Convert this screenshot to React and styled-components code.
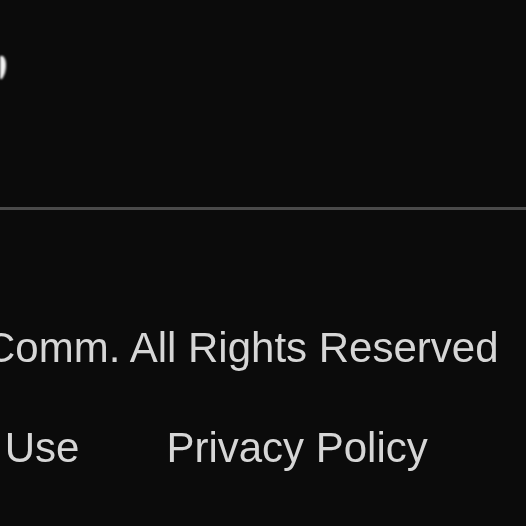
import React from "react";
import styled, { createGlobalStyle } from "styled-components";

const Global = createGlobalStyle`
  html, body {
    margin: 0;
    padding: 0;
    background: #0b0b0b;
    overflow: hidden;
  }
  #root {
    min-height: 526px;
  }
`;

const Footer = styled.footer`
  width: 526px;
  height: 526px;
  background: #0b0b0b;
  color: #d6d6d6;
  font-family: "Liberation Sans", Arial, Helvetica, sans-serif;
  display: flex;
  flex-direction: column;
  overflow: hidden;
`;

const TopArea = styled.div`
  height: 207px;
  display: flex;
  align-items: flex-start;
  padding-top: 55px;
  box-sizing: border-box;
`;

const LogoTail = styled.svg`
  display: block;
  width: 6px;
  height: 26px;
  filter: blur(0.8px);
`;

const Divider = styled.hr`
  margin: 0;
  border: 0;
  height: 3px;
  background: #4a4a4a;
  width: 100%;
`;

const Bottom = styled.div`
  display: flex;
  flex-direction: column;
  gap: 52px;
  padding-top: 114px;
`;

const Line = styled.div`
  display: flex;
  align-items: baseline;
  gap: ${(p) => p.$gap || 0}px;
  margin-left: ${(p) => p.$shift || 0}px;
  font-size: 42px;
  line-height: 48px;
  white-space: nowrap;
  filter: blur(0.4px);
`;

const Link = styled.a`
  color: #d6d6d6;
  text-decoration: none;
`;

export default function App() {
  return (
    <>
      <Global />
      <Footer>
        <TopArea>
          <LogoTail viewBox="0 0 6 26">
            <path d="M0 1 H3 Q6 4 6 10 Q6 18 2 24 H0 Z" fill="#f2f2f2" />
          </LogoTail>
        </TopArea>
        <Divider />
        <Bottom>
          <Line $shift={-15}>Comm. All Rights Reserved</Line>
          <Line $shift={-168} $gap={87}>
            <Link href="#">Terms of Use</Link>
            <Link href="#">Privacy Policy</Link>
          </Line>
        </Bottom>
      </Footer>
    </>
  );
}
